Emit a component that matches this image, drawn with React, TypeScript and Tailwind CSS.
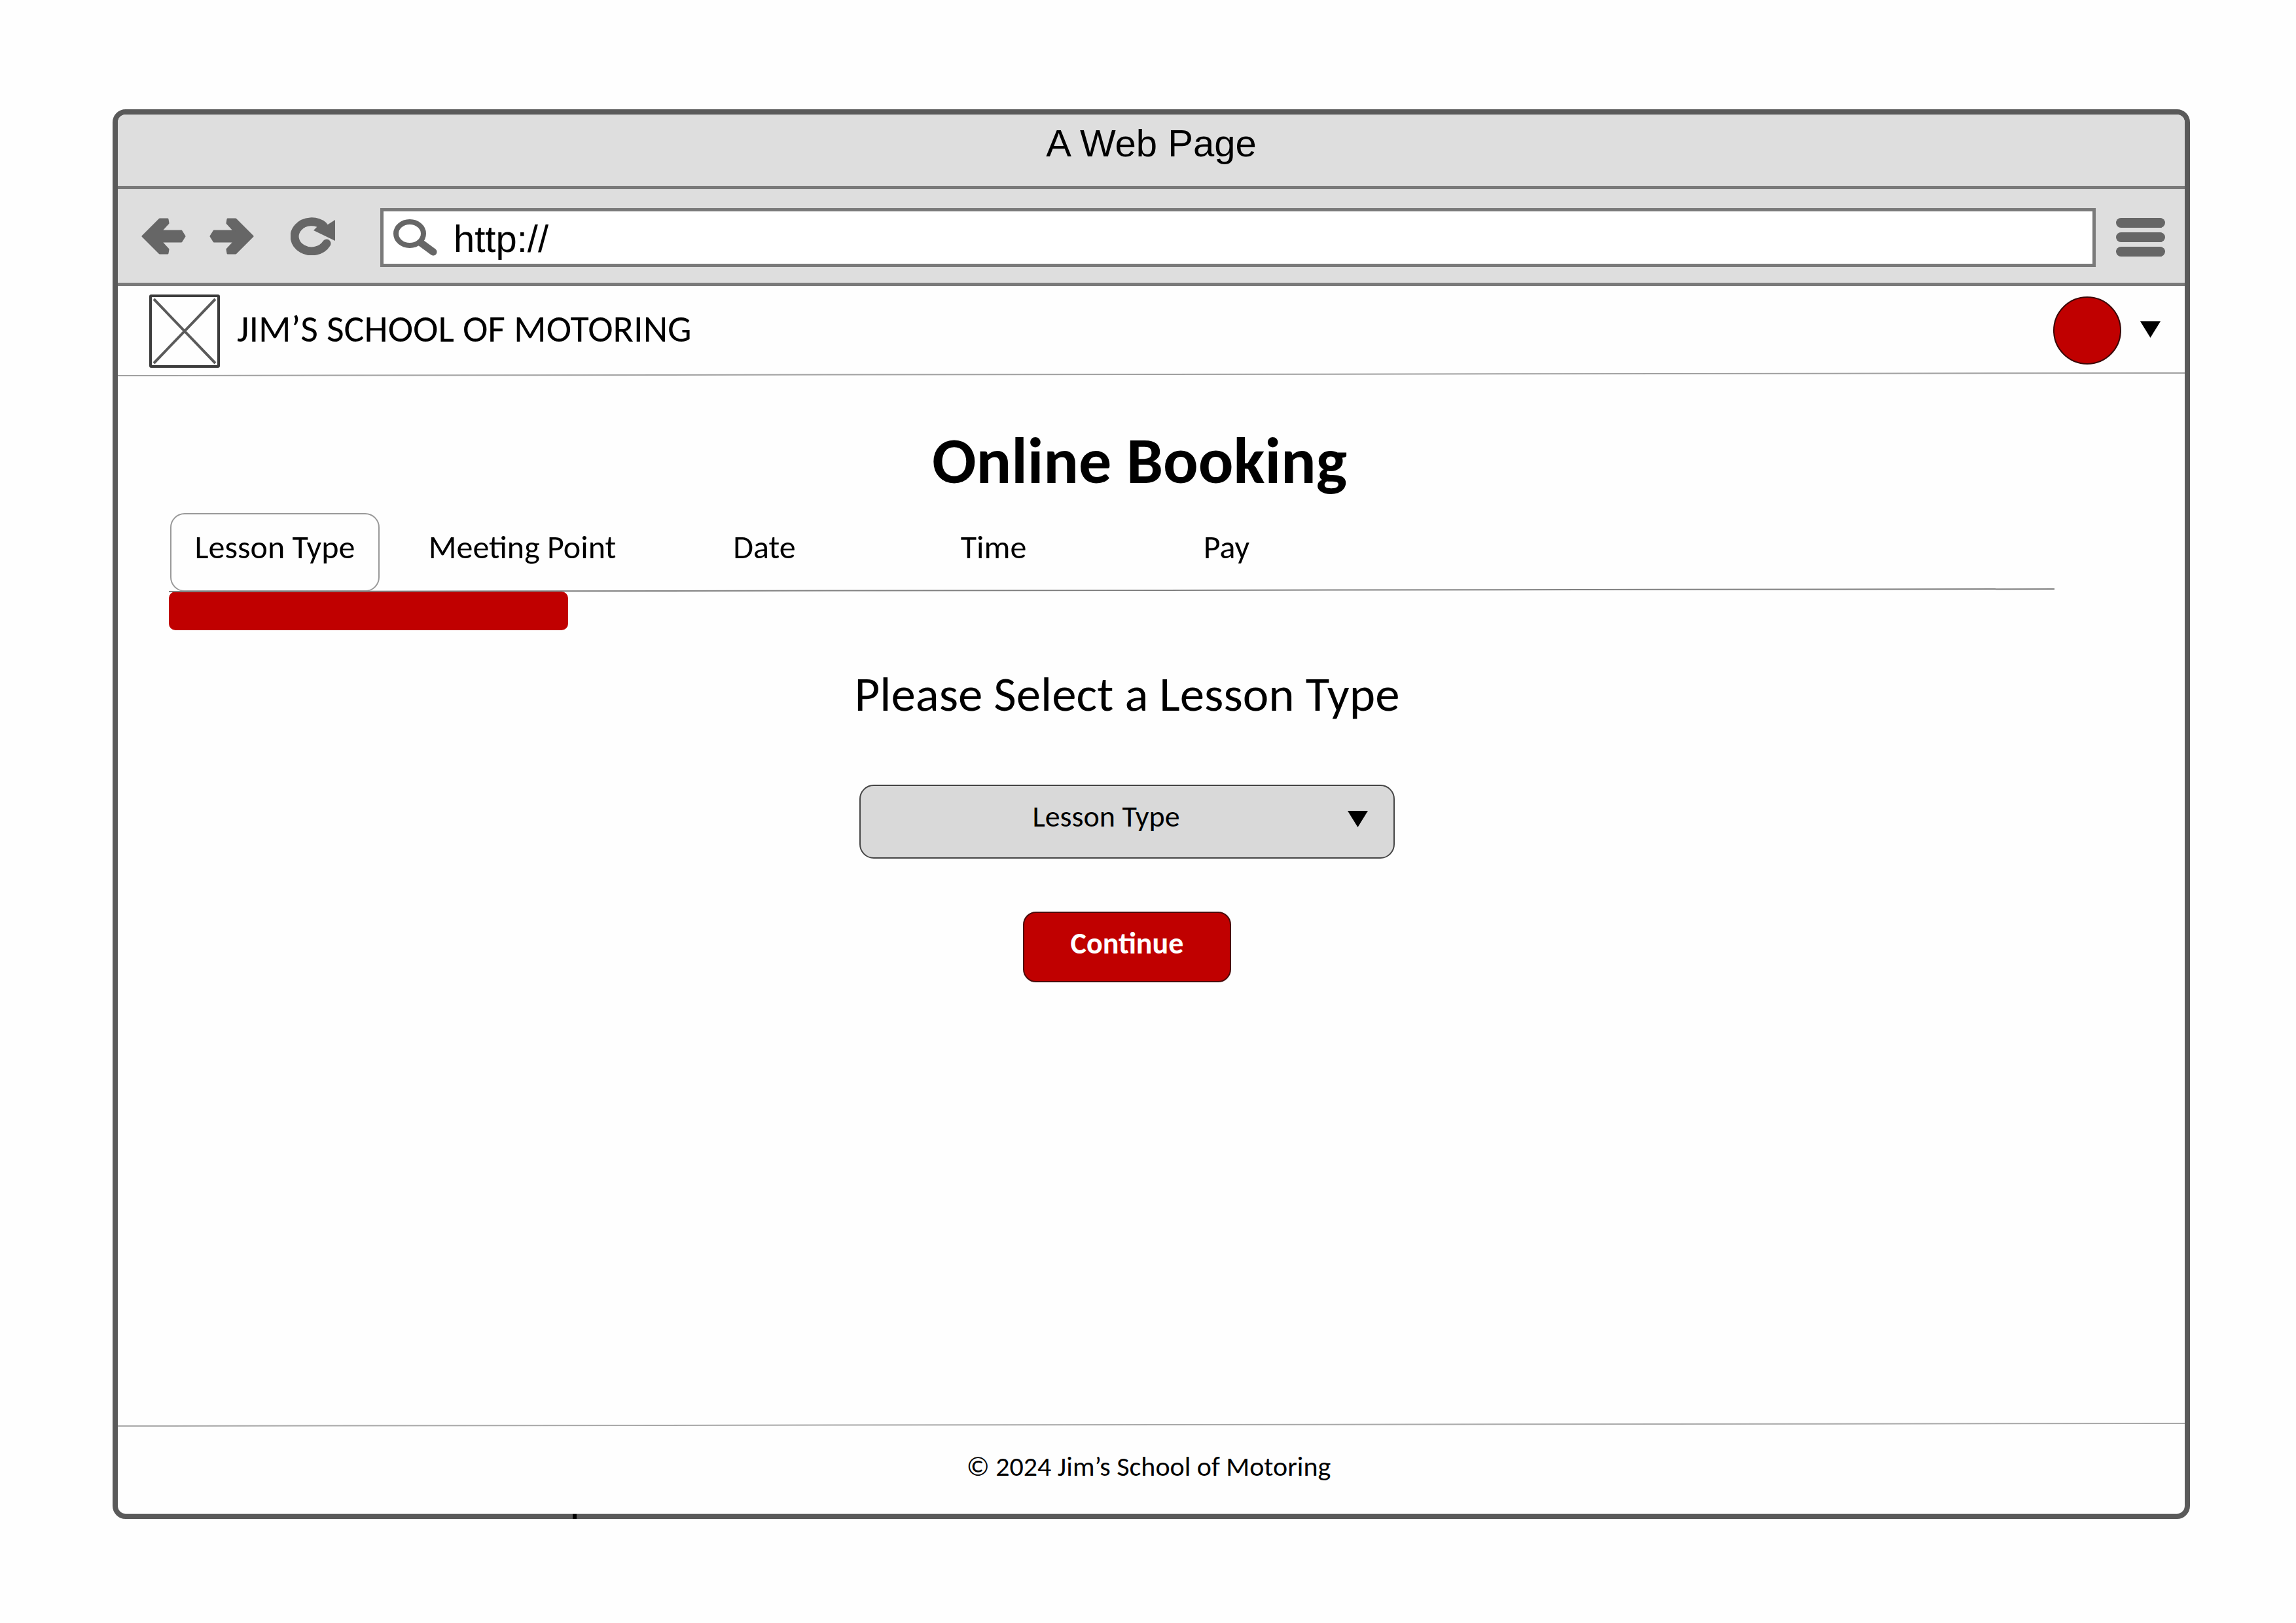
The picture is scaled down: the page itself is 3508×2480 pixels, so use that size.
import { useState } from "react";

const steps = [
  { label: "Lesson Type", width: "w-[320px]" },
  { label: "Meeting Point", width: "w-[436px]" },
  { label: "Date", width: "w-[304px]" },
  { label: "Time", width: "w-[396px]" },
  { label: "Pay", width: "w-[316px]" },
];

function ArrowIcon({ className = "" }: { className?: string }) {
  return (
    <svg viewBox="0 0 68 56" className={`h-[56px] w-[68px] ${className}`} aria-hidden="true">
      <path
        d="M2 28 28 2H40L41 8 30 20H61L66 28 61 36H30L41 48 40 54H28Z"
        fill="#666"
        stroke="#666"
        strokeWidth="3"
        strokeLinejoin="round"
      />
    </svg>
  );
}

function ReloadIcon() {
  return (
    <svg viewBox="0 0 68 58" className="h-[58px] w-[68px]" aria-hidden="true">
      <path d="M50 13A26 22.5 0 1 0 55 40" fill="none" stroke="#666" strokeWidth="13" strokeLinecap="round" />
      <path d="M44 11 57 11 68 4V36L35 20Z" fill="#666" />
    </svg>
  );
}

function SearchIcon() {
  return (
    <svg viewBox="0 0 68 56" className="h-[56px] w-[68px] shrink-0" aria-hidden="true">
      <ellipse cx="25" cy="22" rx="21" ry="18" fill="none" stroke="#666" strokeWidth="8" />
      <path d="M42 36 61 50" stroke="#666" strokeWidth="11" strokeLinecap="round" />
    </svg>
  );
}

function Triangle({ className = "" }: { className?: string }) {
  return (
    <svg viewBox="0 0 31 25" className={`h-[25px] w-[31px] ${className}`} aria-hidden="true">
      <path d="M0 0H31L15.500 25Z" fill="#000" />
    </svg>
  );
}

/* Hairline that rises slightly from left to right */
function Rule({ color, className = "" }: { color: string; className?: string }) {
  return (
    <svg viewBox="0 0 100 6" preserveAspectRatio="none" className={`block h-[6px] w-full ${className}`} aria-hidden="true">
      <path d="M0 5 100 1" stroke={color} strokeWidth="2" vectorEffect="non-scaling-stroke" />
    </svg>
  );
}

export default function App() {
  const [active, setActive] = useState("Lesson Type");
  return (
    <div className="flex min-h-screen flex-col bg-[#fefefe] pt-[167px] pr-[162px] pb-[159px] pl-[172px] font-[Carlito,Calibri,Lato,sans-serif] text-black">
      <div className="relative flex flex-1 flex-col rounded-[20px] border-8 border-[#5a5a5a]">
        <div className="flex h-[114px] items-start justify-center rounded-t-[12px] border-b-5 border-[#7a7a7a] bg-[#dedede] pt-[12px] font-['Liberation_Sans',Arial,sans-serif] text-[58px] leading-[64px]">
          A Web Page
        </div>

        <div className="flex h-[148px] items-center border-b-5 border-[#7a7a7a] bg-[#dedede] pr-[30px] pl-[36px]">
          <button type="button" aria-label="Back">
            <ArrowIcon />
          </button>
          <button type="button" aria-label="Forward" className="ml-[36px]">
            <ArrowIcon className="-scale-x-100" />
          </button>
          <button type="button" aria-label="Reload" className="ml-[56px]">
            <ReloadIcon />
          </button>
          <label className="mt-[4px] ml-[69px] flex h-[90px] flex-1 items-center border-5 border-[#7a7a7a] bg-white pl-[15px]">
            <SearchIcon />
            <input
              type="text"
              aria-label="Address"
              defaultValue="http://"
              className="ml-[24px] h-full min-w-0 flex-1 bg-transparent pt-[4px] font-['Liberation_Sans',Arial,sans-serif] text-[58px] leading-[64px] outline-none"
            />
          </label>
          <button type="button" aria-label="Menu" className="mt-[4px] ml-[31px] flex w-[75px] flex-col gap-[7px]">
            <span className="h-[15px] rounded-full bg-[#666]" />
            <span className="h-[15px] rounded-full bg-[#666]" />
            <span className="h-[15px] rounded-full bg-[#666]" />
          </button>
        </div>

        <header className="flex h-[132px] items-center justify-between pr-[37px] pl-[48px]">
          <div className="flex items-center">
            <svg viewBox="0 0 108 112" className="mt-[6px] h-[112px] w-[108px]" aria-hidden="true">
              <path d="M7 7 101 105M101 7 7 105" stroke="#5a5a5a" strokeWidth="4" />
              <rect x="2" y="2" width="104" height="108" rx="1" fill="none" stroke="#3c3c3c" strokeWidth="4" />
            </svg>
            <span className="ml-[26px] text-[58px] leading-[72px]">JIM’S SCHOOL OF MOTORING</span>
          </div>
          <button type="button" aria-label="Account" className="flex items-center gap-[29px]">
            <span className="mt-[4px] size-[104px] rounded-full border-2 border-[#3a0808] bg-[#c00000]" />
            <Triangle />
          </button>
        </header>
        <Rule color="#a0a0a0" />

        <main className="flex flex-1 flex-col">
          <h1 className="mt-[69px] pr-[36px] text-center text-[100px] leading-[120px] font-bold">Online Booking</h1>

          <div className="mt-[20px] mr-[199px] ml-[78px]">
            <div role="tablist" className="flex pl-[2px] text-[50px] leading-[60px]">
              {steps.map((s) => (
                <button
                  key={s.label}
                  type="button"
                  role="tab"
                  aria-selected={s.label === active}
                  onClick={() => setActive(s.label)}
                  className={`h-[120px] rounded-[22px] border-2 pb-[16px] ${s.width} ${
                    s.label === active ? "border-[#999]" : "border-transparent"
                  }`}
                >
                  {s.label}
                </button>
              ))}
            </div>
            <Rule color="#808080" className="-mt-[5px]" />
            <div
              role="progressbar"
              aria-label="Booking progress"
              aria-valuenow={20}
              className="-mt-px h-[59px] w-[610px] rounded-[10px] bg-[#c00000]"
            />
          </div>

          <form className="flex flex-col items-center pr-[74px]" onSubmit={(e) => e.preventDefault()}>
            <label htmlFor="lesson" className="mt-[53px] text-[75px] leading-[90px]">
              Please Select a Lesson Type
            </label>
            <div className="relative mt-[93px] w-[818px]">
              <select
                id="lesson"
                className="block h-[113px] w-full appearance-none rounded-[22px] border-2 border-[#444] bg-[#d9d9d9] pr-[64px] pb-[16px] text-center text-[46px] [text-align-last:center]"
              >
                <option>Lesson Type</option>
              </select>
              <Triangle className="pointer-events-none absolute top-[40px] right-[41px]" />
            </div>
            <button
              type="submit"
              className="mt-[81px] h-[108px] w-[318px] rounded-[20px] border-2 border-[#4a0a0a] bg-[#c00000] pb-[12px] text-[46px] leading-[56px] font-bold text-white"
            >
              Continue
            </button>
          </form>
        </main>

        <Rule color="#a8a8a8" />
        <footer className="flex h-[133px] items-center justify-center pr-[8px] pb-[12px] text-[42px] leading-[52px]">
          © 2024 Jim’s School of Motoring
        </footer>
        <span className="absolute -bottom-[8px] left-[695px] h-[8px] w-[6px] bg-black" />
      </div>
    </div>
  );
}
